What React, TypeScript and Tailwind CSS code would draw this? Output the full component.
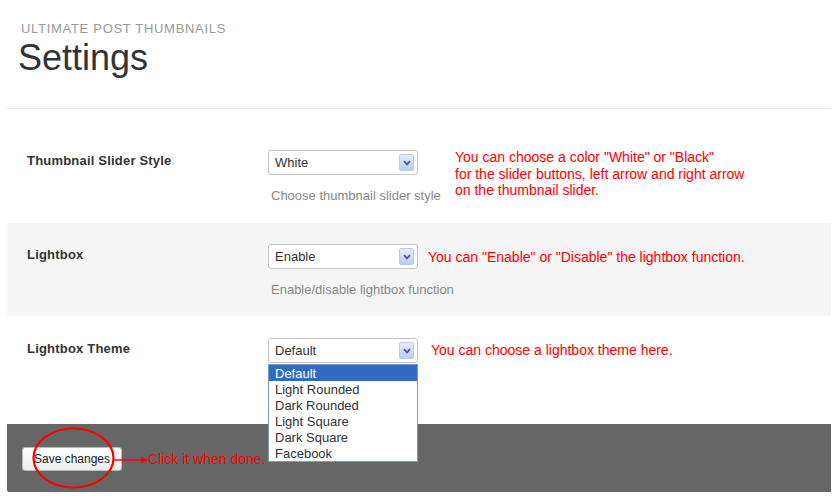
import React from 'react';

const themes = ['Default', 'Light Rounded', 'Dark Rounded', 'Light Square', 'Dark Square', 'Facebook'];

function SelectBox({ value }: { value: string }) {
  return (
    <div className="relative w-[150px] h-[25px] bg-white border border-[#c5c5c5] rounded-[3px] flex items-center pl-[6px] pt-[1px] text-[13px] text-[#333]">
      {value}
      <div className="absolute right-[3px] top-[3px] w-[15px] h-[17px] rounded-[2px] border border-[#b8caf0] bg-linear-to-b from-[#e3ebfd] to-[#b9cdf6] flex items-center justify-center">
        <svg width="8" height="6" viewBox="0 0 8 6">
          <path d="M1 1.2 L4 4.4 L7 1.2" stroke="#4b5f86" strokeWidth="1.8" fill="none" />
        </svg>
      </div>
    </div>
  );
}

export default function App() {
  return (
    <div className="w-[840px] h-[500px] bg-white font-['Liberation_Sans',Arial,sans-serif] overflow-hidden">
      {/* Header */}
      <div className="pt-[21px] pl-[18px]">
        <div className="pl-[3px] text-[13px] leading-[16px] text-[#999] tracking-[0.7px]">ULTIMATE POST THUMBNAILS</div>
        <h1 className="mt-[3px] text-[36px] leading-[36px] text-[#333]">Settings</h1>
      </div>
      <div className="mt-[32px] ml-[7px] w-[824px] h-px bg-[#e8e8e8]" />

      {/* Thumbnail slider style */}
      <div className="ml-[7px] w-[824px] h-[114px] pt-[41px] pl-[20px] flex items-start">
        <div className="w-[241px] mt-[3px] text-[13px] leading-[16px] font-bold text-[#333] tracking-[0.2px]">Thumbnail Slider Style</div>
        <div className="w-[150px]">
          <SelectBox value="White" />
          <div className="mt-[13px] pl-[3px] whitespace-nowrap text-[13px] leading-[16px] text-[#888]">Choose thumbnail slider style</div>
        </div>
        <div className="ml-[37px] -mt-[1px] text-[14px] leading-[16.5px] text-[#ff0000]">
          You can choose a color "White" or "Black"<br />
          for the slider buttons, left arrow and right arrow<br />
          on the thumbnail slider.
        </div>
      </div>

      {/* Lightbox */}
      <div className="ml-[7px] w-[824px] h-[93px] pt-[21px] pl-[20px] flex items-start bg-[#f5f5f5]">
        <div className="w-[241px] mt-[3px] text-[13px] leading-[16px] font-bold text-[#333] tracking-[0.2px]">Lightbox</div>
        <div className="w-[150px]">
          <SelectBox value="Enable" />
          <div className="mt-[13px] pl-[3px] whitespace-nowrap text-[13px] leading-[16px] text-[#888]">Enable/disable lightbox function</div>
        </div>
        <div className="ml-[10px] mt-[5px] text-[14px] leading-[16px] text-[#ff0000] whitespace-nowrap">
          You can "Enable" or "Disable" the lightbox function.
        </div>
      </div>

      {/* Lightbox theme */}
      <div className="ml-[7px] w-[824px] h-[108px] pt-[22px] pl-[20px] flex items-start">
        <div className="w-[241px] mt-[3px] text-[13px] leading-[16px] font-bold text-[#333] tracking-[0.2px]">Lightbox Theme</div>
        <div className="w-[150px] relative">
          <SelectBox value="Default" />
          <div className="absolute z-10 left-0 top-[26px] w-[150px] bg-white border border-[#7f9db9]">
            {themes.map((t, i) => (
              <div
                key={t}
                className={`h-[16px] leading-[17px] pl-[6px] text-[13px] ${i === 0 ? 'bg-[#316ac5] text-white' : 'text-[#333]'}`}
              >
                {t}
              </div>
            ))}
          </div>
        </div>
        <div className="ml-[13px] mt-[4px] text-[14px] leading-[16px] text-[#ff0000] whitespace-nowrap">
          You can choose a lightbox theme here.
        </div>
      </div>

      {/* Footer */}
      <div className="relative ml-[7px] w-[824px] h-[68px] bg-[#666] rounded-bl-[2px] pl-[15px] pt-[23px] flex items-start">
        <button className="w-[100px] h-[24px] rounded-[3px] border border-[#bbb] bg-linear-to-b from-white to-[#ececec] text-[12px] text-[#222]">
          Save changes
        </button>
        <div className="ml-[26px] mt-[4px] text-[14px] leading-[16px] text-[#ff0000] whitespace-nowrap">Click it when done.</div>
        <svg className="absolute left-[25px] top-[3px]" width="84" height="62" viewBox="0 0 84 62">
          <ellipse cx="41.5" cy="31" rx="40" ry="29.5" stroke="#ff0000" strokeWidth="2.2" fill="none" />
        </svg>
        <svg className="absolute left-[106px] top-[31px]" width="36" height="10" viewBox="0 0 36 10">
          <line x1="0" y1="5" x2="30" y2="5" stroke="#ff0000" strokeWidth="1.4" />
          <path d="M28 1.5 L35 5 L28 8.5 Z" fill="#ff0000" />
        </svg>
      </div>
    </div>
  );
}
